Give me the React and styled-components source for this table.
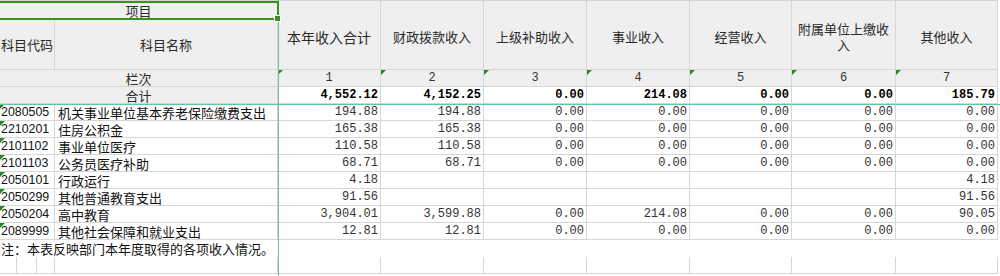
import React from 'react';
import styled, { createGlobalStyle, css } from 'styled-components';

const GlobalStyle = createGlobalStyle`
  html, body {
    margin: 0;
    padding: 0;
    background: #ffffff;
  }
  body {
    font-family: "Noto Sans CJK SC", "Liberation Sans", sans-serif;
    color: #111;
  }
`;

const Wrap = styled.div`
  position: relative;
  width: 1000px;
  height: 276px;
  overflow: hidden;
  background: #fff;
`;

const Sheet = styled.div`
  display: grid;
  width: 998px;
  grid-template-columns: 55px 223px 103px 103px 103px 103px 102px 104px 102px;
  grid-template-rows: 19px 50px 17px 17px repeat(8, 17px) 17px 17px;
  border-top: 1px solid #d4d4d4;
`;

const Cell = styled.div`
  position: relative;
  box-sizing: border-box;
  display: flex;
  align-items: center;
  justify-content: ${(p) => (p.$align === 'right' ? 'flex-end' : p.$align === 'left' ? 'flex-start' : 'center')};
  text-align: center;
  padding: ${(p) => (p.$align === 'right' ? '0 2px 0 0' : p.$align === 'left' ? '0 0 0 2px' : '0 4px')};
  border-right: ${(p) => (p.$noRight ? 'none' : '1px solid #d6d6d6')};
  border-bottom: ${(p) => (p.$noBottom ? 'none' : '1px solid #d6d6d6')};
  background: ${(p) => (p.$head ? '#efefef' : '#ffffff')};
  font-size: ${(p) => p.$size || 13}px;
  line-height: 15px;
  color: ${(p) => (p.$head ? '#2a2a2a' : '#111')};
  white-space: nowrap;
  overflow: visible;
  ${(p) =>
    p.$mono &&
    css`
      font-family: "Liberation Mono", "DejaVu Sans Mono", monospace;
      font-size: 12px;
      color: ${p.$bold ? '#000' : '#333'};
    `}
  ${(p) =>
    p.$code &&
    css`
      font-family: "Liberation Sans", sans-serif;
      font-size: 12.4px;
      padding-left: 1px;
    `}
  font-weight: ${(p) => (p.$bold ? 700 : 400)};
  ${(p) =>
    p.$flag &&
    css`
      &::before {
        content: '';
        position: absolute;
        left: 0;
        top: 0;
        border-top: 5px solid #1f8a1f;
        border-right: 5px solid transparent;
      }
    `}
`;

const HeadLabel = styled.span`
  display: block;
  white-space: normal;
  text-align: center;
  line-height: 16px;
  margin-top: 4px;
`;

const SplitCell = styled.div`
  display: grid;
  grid-template-columns: 17px 20px 18px;
  box-sizing: border-box;
  border-bottom: 1px solid #d6d6d6;
`;

const SplitPart = styled.div`
  border-right: 1px solid #d6d6d6;
`;

const Selection = styled.div`
  position: absolute;
  left: -2px;
  top: 1px;
  width: 281px;
  height: 19px;
  box-sizing: border-box;
  border: 2px solid #3e8e24;
  pointer-events: none;

  &::after {
    content: '';
    position: absolute;
    right: -4px;
    bottom: -4px;
    width: 5px;
    height: 5px;
    background: #3e8e24;
    border: 1px solid #fff;
  }
`;

const FreezeV = styled.div`
  position: absolute;
  left: 278px;
  top: 0;
  width: 1px;
  height: 276px;
  background: #5cc8a2;
`;

const FreezeH = styled.div`
  position: absolute;
  left: 0;
  top: 104px;
  width: 1000px;
  height: 1px;
  background: #5cc8a2;
`;

const columns = [
  { title: '本年收入合计', size: 14 },
  { title: '财政拨款收入' },
  { title: '上级补助收入' },
  { title: '事业收入' },
  { title: '经营收入' },
  { title: <>附属单位上缴收<br />入</> },
  { title: '其他收入' },
];

const totals = ['4,552.12', '4,152.25', '0.00', '214.08', '0.00', '0.00', '185.79'];

const rows = [
  ['2080505', '机关事业单位基本养老保险缴费支出', ['194.88', '194.88', '0.00', '0.00', '0.00', '0.00', '0.00']],
  ['2210201', '住房公积金', ['165.38', '165.38', '0.00', '0.00', '0.00', '0.00', '0.00']],
  ['2101102', '事业单位医疗', ['110.58', '110.58', '0.00', '0.00', '0.00', '0.00', '0.00']],
  ['2101103', '公务员医疗补助', ['68.71', '68.71', '0.00', '0.00', '0.00', '0.00', '0.00']],
  ['2050101', '行政运行', ['4.18', '', '', '', '', '', '4.18']],
  ['2050299', '其他普通教育支出', ['91.56', '', '', '', '', '', '91.56']],
  ['2050204', '高中教育', ['3,904.01', '3,599.88', '0.00', '214.08', '0.00', '0.00', '90.05']],
  ['2089999', '其他社会保障和就业支出', ['12.81', '12.81', '0.00', '0.00', '0.00', '0.00', '0.00']],
];

export default function App() {
  return (
    <>
      <GlobalStyle />
      <Wrap>
        <Sheet>
          {/* header */}
          <Cell $head style={{ gridColumn: '1 / 3', gridRow: '1' }}>项目</Cell>
          {columns.map((c, i) => (
            <Cell key={i} $head $size={c.size} style={{ gridColumn: `${i + 3}`, gridRow: '1 / 3' }}>
              <HeadLabel>{c.title}</HeadLabel>
            </Cell>
          ))}
          <Cell $head style={{ gridColumn: '1', gridRow: '2' }}>科目代码</Cell>
          <Cell $head style={{ gridColumn: '2', gridRow: '2' }}>科目名称</Cell>

          {/* 栏次 */}
          <Cell $head style={{ gridColumn: '1 / 3' }}>栏次</Cell>
          {columns.map((_, i) => (
            <Cell key={i} $head $mono $flag>
              {i + 1}
            </Cell>
          ))}

          {/* 合计 */}
          <Cell $head style={{ gridColumn: '1 / 3' }}>合计</Cell>
          {totals.map((t, i) => (
            <Cell key={i} $mono $bold $align="right">
              {t}
            </Cell>
          ))}

          {rows.map(([code, name, vals]) => (
            <React.Fragment key={code}>
              <Cell $code $flag $align="left">{code}</Cell>
              <Cell $align="left" style={{ paddingLeft: 3 }}>{name}</Cell>
              {vals.map((v, i) => (
                <Cell key={i} $mono $align="right">
                  {v}
                </Cell>
              ))}
            </React.Fragment>
          ))}

          <Cell $align="left" $noRight $noBottom style={{ gridColumn: '1 / -1', paddingLeft: 1 }}>
            注：本表反映部门本年度取得的各项收入情况。
          </Cell>

          <SplitCell>
            <SplitPart />
            <SplitPart />
            <SplitPart />
          </SplitCell>
          <Cell />
          {columns.map((_, i) => (
            <Cell key={i} />
          ))}
        </Sheet>
        <FreezeV />
        <FreezeH />
        <Selection />
      </Wrap>
    </>
  );
}
